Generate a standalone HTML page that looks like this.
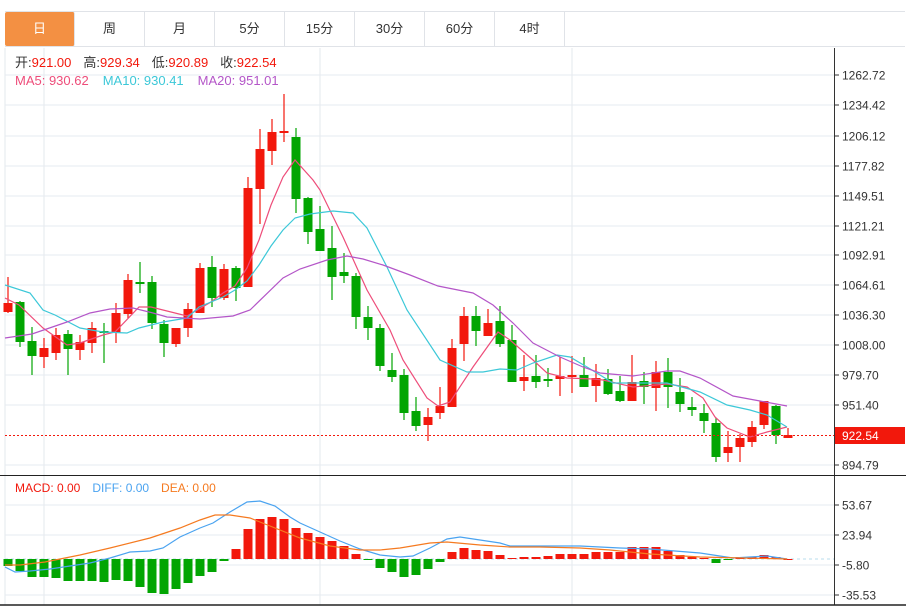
<!DOCTYPE html>
<html><head><meta charset="utf-8">
<style>
*{margin:0;padding:0;box-sizing:border-box}
body{width:906px;height:606px;background:#fff;font-family:"Liberation Sans","Noto Sans CJK SC",sans-serif;overflow:hidden;position:relative}
.tabs{position:absolute;left:5px;top:11px;height:36px;width:900px;border-top:1px solid #e0e3e8;border-bottom:1px solid #e0e3e8;display:flex}
.tab{width:70px;height:34px;line-height:34px;text-align:center;font-size:13px;color:#333;border-right:1px solid #e0e3e8}
.tab.on{background:#f39043;color:#fff;border-radius:2px}
svg{position:absolute;left:0;top:0}
</style></head><body>
<div class="tabs"><div class="tab on">日</div><div class="tab">周</div><div class="tab">月</div><div class="tab">5分</div><div class="tab">15分</div><div class="tab">30分</div><div class="tab">60分</div><div class="tab">4时</div></div>
<svg id="s" width="906" height="606" style="top:0" xmlns="http://www.w3.org/2000/svg" font-family="Liberation Sans, Noto Sans CJK SC, sans-serif"></svg>
<script>
var s=document.getElementById('s'),h='';
var R='#f2180c',G='#02a502';
h+='<line x1="5" y1="48" x2="5" y2="605" stroke="#e3e8ee"/>';
[44,320,572].forEach(function(x){h+='<line x1="'+x+'" y1="48" x2="'+x+'" y2="605" stroke="#e3e8ee"/>';});
var py=[[75,'1262.72'],[105,'1234.42'],[136,'1206.12'],[166,'1177.82'],[196,'1149.51'],[226,'1121.21'],[255,'1092.91'],[285,'1064.61'],[315,'1036.30'],[345,'1008.00'],[375,'979.70'],[405,'951.40'],[465,'894.79']];
py.forEach(function(p){h+='<line x1="5" y1="'+p[0]+'" x2="834" y2="'+p[0]+'" stroke="#e6ebf0"/><line x1="834" y1="'+p[0]+'" x2="839" y2="'+p[0]+'" stroke="#333"/><text x="842" y="'+(p[0]+4.5)+'" font-size="12" fill="#333">'+p[1]+'</text>';});
var my=[[505,'53.67'],[535,'23.94'],[565,'-5.80'],[595,'-35.53']];
my.forEach(function(p){h+='<line x1="5" y1="'+p[0]+'" x2="834" y2="'+p[0]+'" stroke="#e6ebf0"/><line x1="834" y1="'+p[0]+'" x2="839" y2="'+p[0]+'" stroke="#333"/><text x="842" y="'+(p[0]+4.5)+'" font-size="12" fill="#333">'+p[1]+'</text>';});
h+='<line x1="5" y1="559" x2="834" y2="559" stroke="#b8dcec" stroke-dasharray="3,3"/>';
var C=[[303,312,277,313,1],[302,342,301,347,0],[341,356,327,375,0],[348,357,338,368,1],[335,353,328,360,1],[334,349,330,375,0],[342,350,335,360,1],[328,343,322,353,1],[331,333,323,363,0],[313,333,303,343,1],[280,314,274,318,1],[282,283,262,293,0],[282,323,276,329,0],[324,343,320,357,0],[328,344,328,347,1],[309,328,303,337,1],[268,313,263,313,1],[267,298,256,307,0],[269,298,264,300,1],[268,288,266,301,0],[188,287,177,287,1],[149,189,129,224,1],[132,151,119,165,1],[131,133,94,142,1],[137,199,128,213,0],[198,232,197,244,0],[229,251,206,251,0],[248,277,226,300,0],[272,276,253,283,0],[276,317,273,329,0],[317,328,306,340,0],[328,366,324,371,0],[370,377,353,382,0],[375,413,369,420,0],[411,426,397,431,0],[417,425,408,441,1],[406,413,387,419,1],[348,407,339,407,1],[316,344,307,361,1],[316,331,306,346,0],[323,336,309,336,1],[321,344,306,347,0],[340,382,325,382,0],[377,381,355,391,1],[376,382,355,388,0],[379,380,368,387,0],[376,379,357,396,1],[375,377,356,393,1],[375,387,357,387,0],[378,386,364,402,1],[379,394,369,395,0],[391,401,376,402,0],[382,401,355,401,1],[381,387,372,404,0],[372,388,361,411,1],[372,387,358,408,0],[392,404,378,412,0],[407,410,397,416,0],[413,421,404,433,0],[423,457,418,462,0],[447,453,431,462,1],[438,447,434,462,1],[427,442,421,447,1],[401,425,401,429,1],[406,435,405,444,0],[435,438,428,438,1]];
C.forEach(function(c,i){var x=8+12*i,col=c[4]?R:G;var t=Math.min(c[0],c[1]),b=Math.max(c[0],c[1]);if(b-t<2)b=t+2;
h+='<line x1="'+x+'" y1="'+c[2]+'" x2="'+x+'" y2="'+c[3]+'" stroke="'+col+'" stroke-width="1.2"/><rect x="'+(x-4.5)+'" y="'+t+'" width="9" height="'+(b-t)+'" fill="'+col+'"/>';});
function pl(pts,col){h+='<polyline fill="none" stroke="'+col+'" stroke-width="1.2" points="'+pts+'"/>';}
pl('5,298 19,305 43,328 67,345 80,343 103,335 115,332 139,307 151,307 175,313 187,316 211,302 223,293 235,286 247,268 259,240 271,205 283,177 295,160 313,180 320,190 343,237 367,290 390,330 403,360 427,398 438,406 450,402 473,367 498,332 510,340 533,360 547,373 567,378 593,379 603,380 633,387 667,384 687,387 703,398 715,417 727,428 750,437 767,432 787,427','#ee4d7a');
pl('5,285 30,293 43,310 55,315 80,328 103,332 127,333 139,328 163,322 175,320 187,318 199,307 223,297 235,290 247,281 259,265 271,246 283,230 295,218 310,214 333,211 353,213 367,228 387,267 407,310 440,360 467,372 483,372 500,369 517,370 533,363 557,355 570,357 587,367 613,383 667,383 700,392 727,405 750,410 767,415 787,427','#3cc8d8');
pl('5,338 32,334 67,322 90,313 110,309 133,308 153,313 167,317 200,319 233,316 250,310 283,278 300,269 327,260 347,256 363,259 383,265 410,275 438,286 473,293 493,305 513,323 533,343 560,357 583,367 600,373 633,376 667,371 680,371 700,378 733,396 760,401 787,406','#b456c8');
h+='<line x1="5" y1="435.5" x2="834" y2="435.5" stroke="'+R+'" stroke-dasharray="2,2"/><rect x="834" y="427" width="71" height="17" fill="'+R+'"/><text x="842" y="440" font-size="12" fill="#fff">922.54</text>';
var M=[566,571,577,577,578,581,581,581,582,580,581,587,593,594,589,583,576,572,561,549,529,519,517,519,528,533,537,541,546,554,560,568,572,577,575,569,562,552,548,550,551,555,558,557,557,556,554,554,554,552,552,552,547,547,547,551,555,557,558,563,560,557,557,555,557,559];
M.forEach(function(v,i){var x=8+12*i;var col=v>559?G:R;var t=Math.min(v,559),b=Math.max(v,559);if(b-t<1)b=t+1;
h+='<rect x="'+(x-4.5)+'" y="'+t+'" width="9" height="'+(b-t)+'" fill="'+col+'"/>';});
pl('5,567 15,572 30,571 50,569 70,566 90,563 110,558 130,552 150,551 163,548 180,537 200,528 213,523 230,512 247,502 260,501 275,506 290,517 300,523 320,532 340,541 360,549 380,555 400,557 413,556 430,548 447,539 460,537 480,540 500,543 510,546 540,546 580,546 620,548 650,549 700,553 733,558 750,557 767,556 787,559','#4aa3f0');
pl('5,565 20,565 45,562 80,555 110,548 150,538 180,528 200,520 215,515 230,515 250,518 270,526 300,538 330,546 360,550 380,550 400,548 430,543 447,542 480,545 510,547 540,547 580,548 610,550 650,554 700,557 787,559','#f57a20');
h+='<line x1="834.5" y1="48" x2="834.5" y2="605" stroke="#333"/><line x1="0" y1="475.5" x2="906" y2="475.5" stroke="#222"/><line x1="0" y1="605" x2="906" y2="605" stroke="#222" stroke-width="1.5"/>';
h+='<text y="67" font-size="13"><tspan x="15" fill="#333">开:</tspan><tspan fill="'+R+'">921.00</tspan><tspan dx="12" fill="#333">高:</tspan><tspan fill="'+R+'">929.34</tspan><tspan dx="12" fill="#333">低:</tspan><tspan fill="'+R+'">920.89</tspan><tspan dx="12" fill="#333">收:</tspan><tspan fill="'+R+'">922.54</tspan></text>';
h+='<text y="85" font-size="13"><tspan x="15" fill="#ee4d7a">MA5: 930.62</tspan><tspan dx="14" fill="#3cc8d8">MA10: 930.41</tspan><tspan dx="14" fill="#b456c8">MA20: 951.01</tspan></text>';
h+='<text y="492" font-size="12"><tspan x="15" fill="'+R+'">MACD: 0.00</tspan><tspan dx="12" fill="#4aa3f0">DIFF: 0.00</tspan><tspan dx="12" fill="#f57a20">DEA: 0.00</tspan></text>';
s.innerHTML=h;
</script>
</body></html>
